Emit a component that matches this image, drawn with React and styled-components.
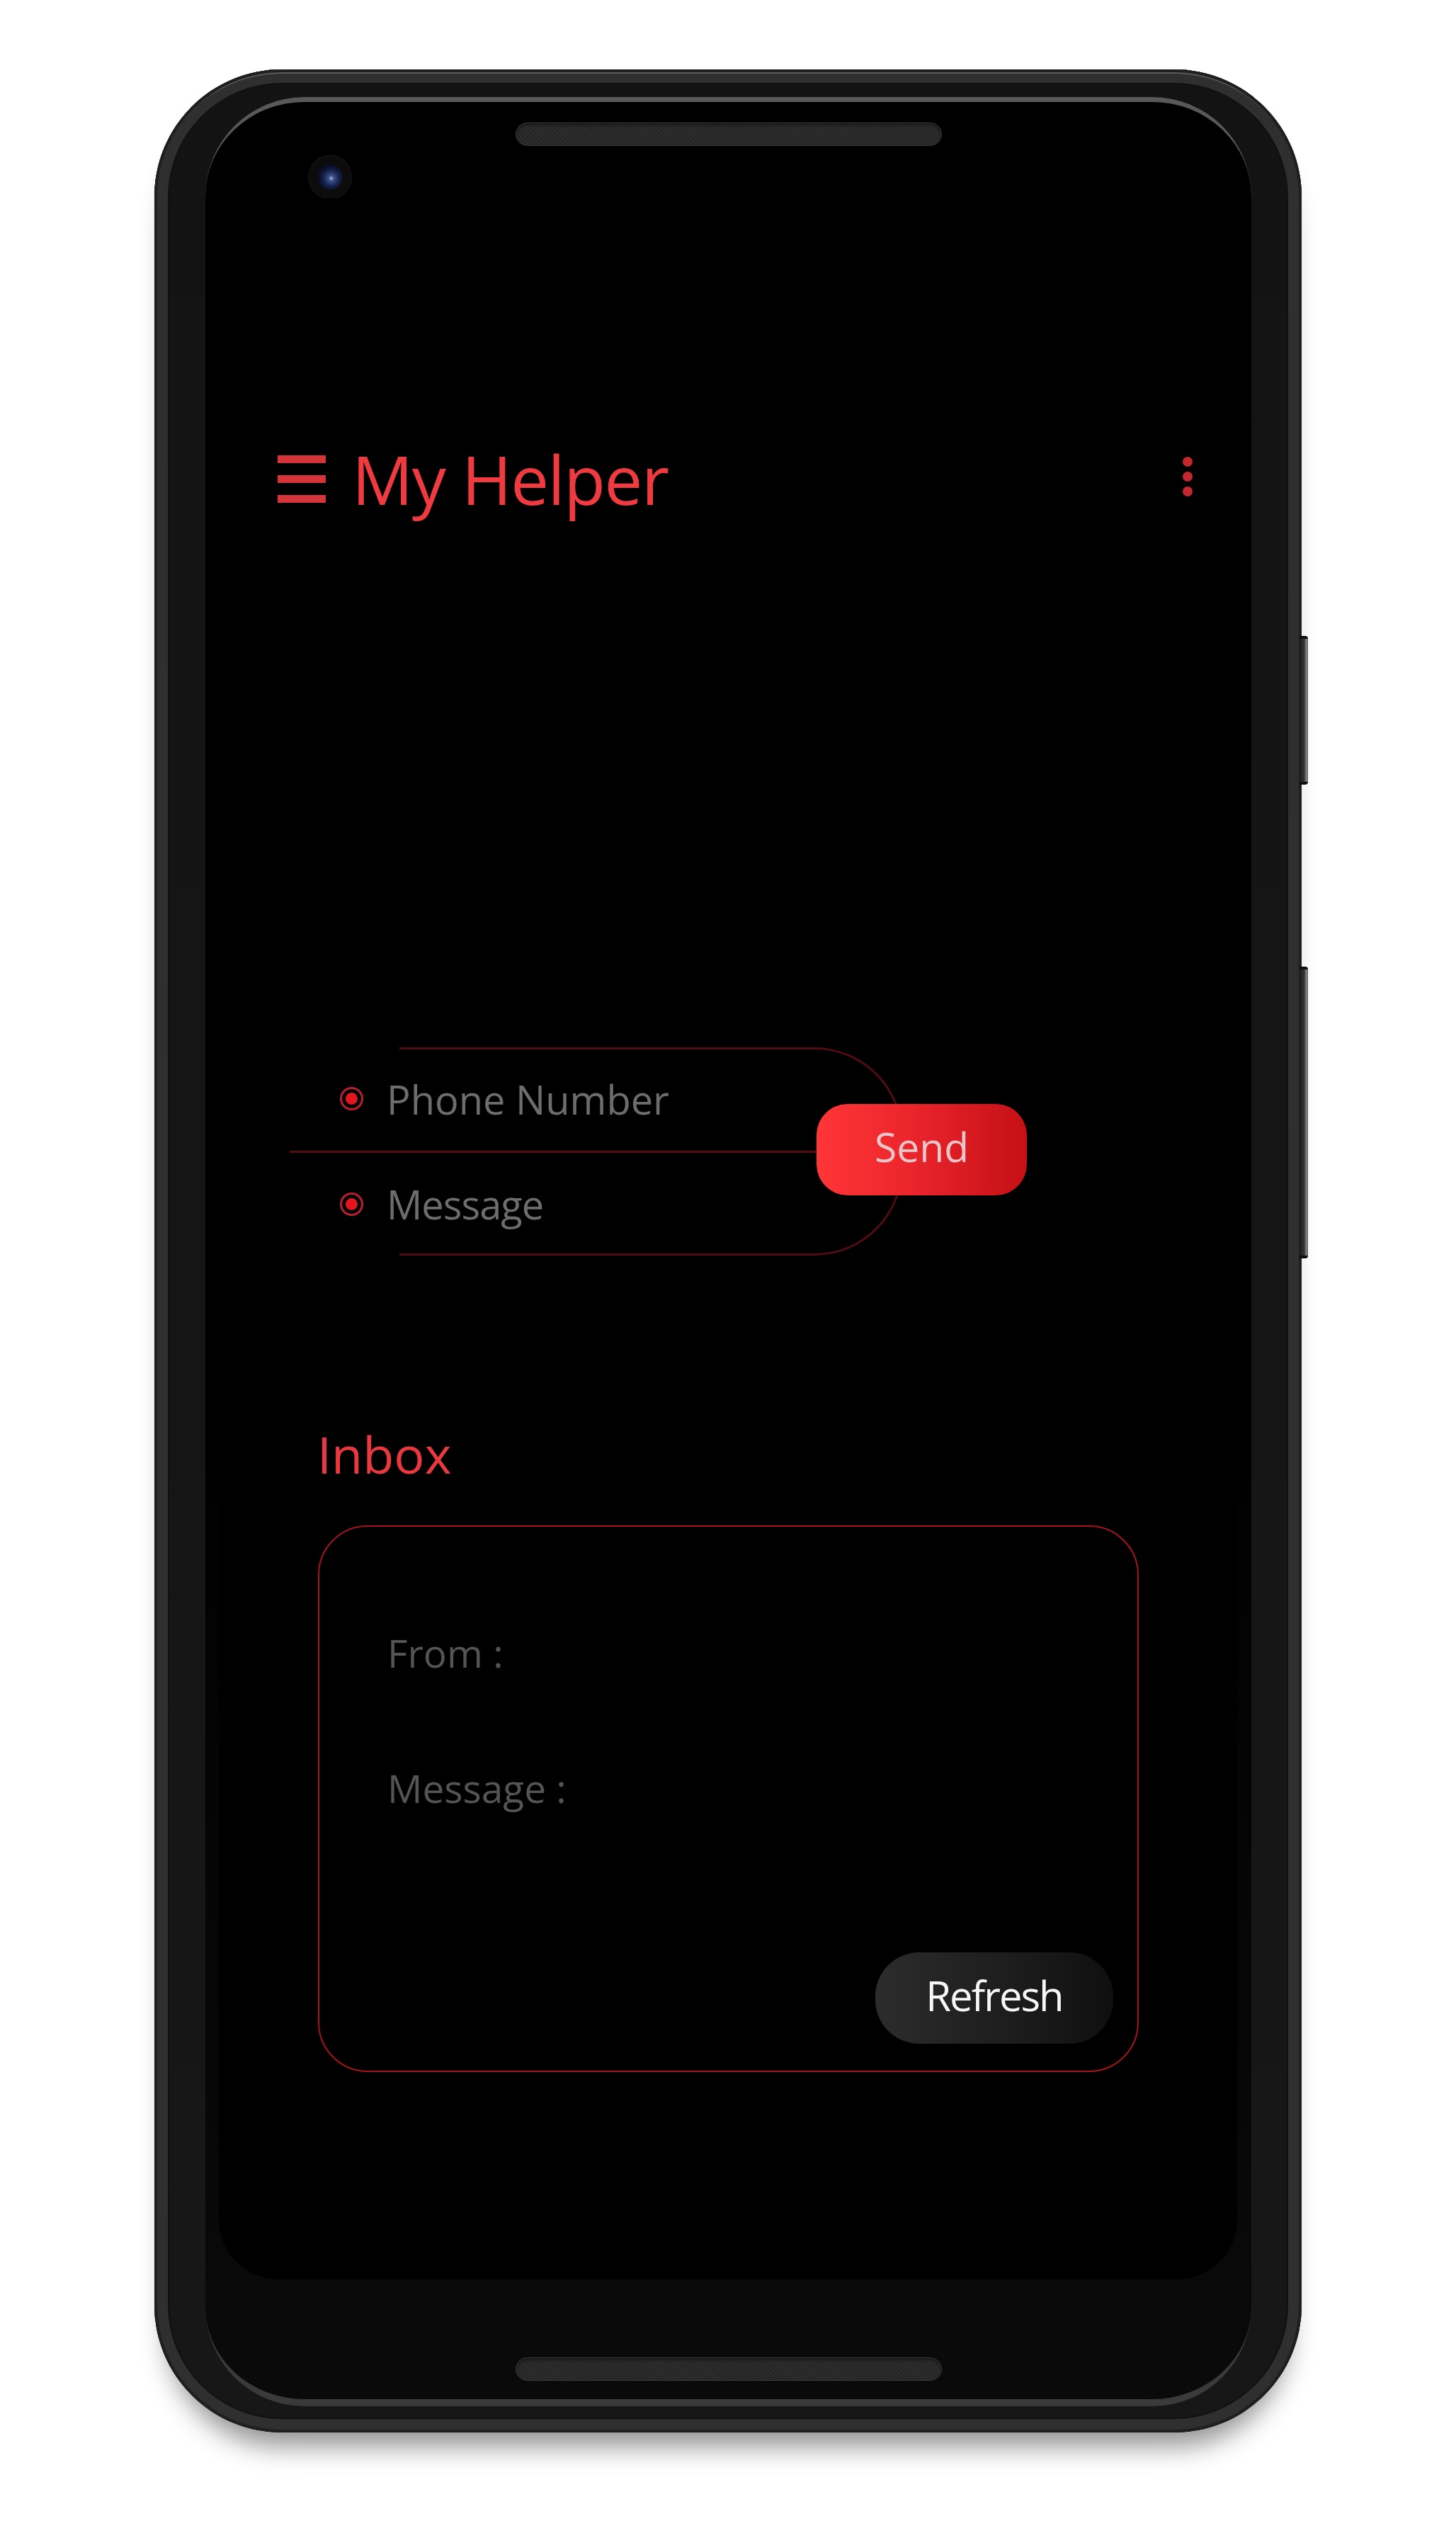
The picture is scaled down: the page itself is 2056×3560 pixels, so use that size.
import React from "react";
import styled, { createGlobalStyle } from "styled-components";

const Global = createGlobalStyle`
  html, body { margin: 0; padding: 0; background: #ffffff; }
  body { font-family: "Open Sans", "Noto Sans", sans-serif; }
  * { box-sizing: border-box; }
`;

const Page = styled.div`
  width: 2056px;
  height: 3560px;
  padding: 98px 0 0 218px;
  overflow: hidden;
`;

const Body = styled.div`
  position: relative;
  width: 1620px;
  height: 3337px;
  padding: 39px 71px 37px 72px;
  border-radius: 180px;
  background: linear-gradient(180deg, #131313 0%, #151515 50%, #171717 100%);
  box-shadow:
    inset 0 0 0 4px #1f1f1f,
    inset 0 6px 0 0 #5a5a5a,
    inset 0 0 0 19px #2f2f2f,
    inset 0 0 0 21px #101010,
    0 38px 36px -18px rgba(0, 0, 0, 0.42);
`;

const SideKey = styled.div`
  position: absolute;
  left: 1617px;
  top: ${(p) => p.$top}px;
  width: 12px;
  height: ${(p) => p.$h}px;
  border-radius: 0 4px 4px 0;
  background: linear-gradient(90deg, #1c1c1c 0%, #333 55%, #8d8d8d 85%, #4a4a4a 100%);
  border-top: 4px solid #0e0e0e;
  border-bottom: 4px solid #0e0e0e;
`;

const Glass = styled.div`
  width: 100%;
  height: 100%;
  display: flex;
  flex-direction: column;
  border-radius: 140px;
  border-top: 7px solid #585858;
  border-bottom: 10px solid #3a3a3a;
  background: linear-gradient(180deg, #000 0%, #000 55%, #0a0a0a 100%);
`;

const TopBezel = styled.div`
  height: 136px;
  flex-shrink: 0;
  display: flex;
  flex-direction: column;
`;

const Speaker = styled.div`
  align-self: center;
  width: 602px;
  height: 33px;
  margin-top: ${(p) => p.$mt}px;
  border-radius: 17px;
  border: 1px solid #3c3c3c;
  background:
    repeating-linear-gradient(45deg, rgba(255,255,255,0.03) 0 2px, rgba(0,0,0,0.05) 2px 4px),
    #272727;
  box-shadow: inset 0 2px 4px rgba(0,0,0,0.6);
  flex-shrink: 0;
`;

const Camera = styled.div`
  width: 60px;
  height: 60px;
  margin: 14px 0 0 146px;
  border-radius: 50%;
  background: #0c0c0c;
  box-shadow: 0 0 0 1px #161616;
  display: grid;
  place-items: center;
`;

const Lens = styled.div`
  width: 36px;
  height: 36px;
  border-radius: 50%;
  background: radial-gradient(circle at 55% 55%, #9ab0d0 0px, #3a4e86 4px, #17234f 11px, #0a0e22 18px);
`;

const Screen = styled.div`
  flex: 1;
  margin: 0 20px 0 19px;
  background: #000;
  border-radius: 0 0 85px 85px;
  display: flex;
  flex-direction: column;
  align-items: flex-start;
`;

const BottomBezel = styled.div`
  height: 169px;
  flex-shrink: 0;
  display: flex;
  flex-direction: column;
`;

const Toolbar = styled.div`
  align-self: stretch;
  height: 100px;
  margin-top: 346px;
  padding: 0 63px 0 83px;
  display: flex;
  align-items: center;
`;

const Hamburger = styled.div`
  display: flex;
  flex-direction: column;
  gap: 17px;
`;

const Bar = styled.span`
  display: block;
  width: 68px;
  height: 11px;
  background: #d5353a;
`;

const Title = styled.h1`
  margin: 0 0 0 37px;
  font-size: 96px;
  font-weight: 400;
  line-height: 1;
  letter-spacing: -1.5px;
  color: #ef3a40;
`;

const Kebab = styled.div`
  margin-left: auto;
  margin-top: -6px;
  display: flex;
  flex-direction: column;
  gap: 7px;
`;

const Dot = styled.span`
  width: 14px;
  height: 14px;
  border-radius: 50%;
  background: #c4272d;
`;

const FormRow = styled.div`
  margin: 753px 0 0 100px;
  display: flex;
  align-items: center;
`;

const FieldsBox = styled.div`
  position: relative;
  width: 866px;
  height: 294px;
  display: flex;
  flex-direction: column;
  &::before {
    content: "";
    position: absolute;
    left: 155px;
    top: 0;
    right: 0;
    bottom: 0;
    border: 3px solid #4f0c14;
    border-left: none;
    border-radius: 0 125px 125px 0;
    pointer-events: none;
  }
`;

const Field = styled.div`
  flex: 1;
  display: flex;
  align-items: center;
  padding-left: 71px;
  gap: 33px;
`;

const Radio = styled.span`
  width: 33px;
  height: 33px;
  border-radius: 50%;
  border: 3px solid #b5202c;
  display: grid;
  place-items: center;
  flex-shrink: 0;
  &::after {
    content: "";
    width: 17px;
    height: 17px;
    border-radius: 50%;
    background: #e3161e;
  }
`;

const FieldText = styled.span`
  font-size: 56px;
  line-height: 1;
  color: #6d6d6d;
  letter-spacing: ${(p) => p.$ls || 0}px;
`;

const Divider = styled.div`
  height: 3px;
  flex-shrink: 0;
  background: #540c15;
`;

const SendButton = styled.button`
  position: relative;
  z-index: 1;
  flex-shrink: 0;
  width: 297px;
  height: 129px;
  margin: 0 0 5px -122px;
  padding: 0 0 8px 0;
  border: none;
  border-radius: 44px;
  background: linear-gradient(90deg, #ff3638 0%, #ea252b 45%, #c41016 100%);
  color: #e8c5c8;
  font-family: "Open Sans", sans-serif;
  font-size: 57px;
  line-height: 1;
`;

const InboxTitle = styled.h2`
  margin: 244px 0 0 139px;
  font-size: 72px;
  font-weight: 400;
  line-height: 1;
  color: #e9393e;
`;

const InboxCard = styled.div`
  margin: 65px 0 0 140px;
  width: 1159px;
  height: 772px;
  border: 2px solid #a5141d;
  border-radius: 70px;
  padding: 150px 34px 38px 96px;
  display: flex;
  flex-direction: column;
`;

const Label = styled.div`
  font-size: 55px;
  line-height: 1;
  color: #545454;
  margin-top: ${(p) => p.$mt || 0}px;
`;

const RefreshButton = styled.button`
  margin-top: auto;
  align-self: flex-end;
  width: 336px;
  height: 129px;
  padding: 0 0 8px 0;
  border: none;
  border-radius: 62px;
  background: linear-gradient(90deg, #2c2c2c 0%, #1c1c1c 60%, #0f0f0f 100%);
  color: #f7f7f7;
  font-family: "Open Sans", sans-serif;
  font-size: 58px;
  line-height: 1;
  letter-spacing: -2px;
`;

export default function App() {
  return (
    <>
      <Global />
      <Page>
        <Body>
          <SideKey $top={800} $h={210} />
          <SideKey $top={1267} $h={412} />
          <Glass>
            <TopBezel>
              <Speaker $mt={29} />
              <Camera>
                <Lens />
              </Camera>
            </TopBezel>
            <Screen>
              <Toolbar>
                <Hamburger>
                  <Bar />
                  <Bar />
                  <Bar />
                </Hamburger>
                <Title>My Helper</Title>
                <Kebab>
                  <Dot />
                  <Dot />
                  <Dot />
                </Kebab>
              </Toolbar>
              <FormRow>
                <FieldsBox>
                  <Field>
                    <Radio />
                    <FieldText>Phone Number</FieldText>
                  </Field>
                  <Divider />
                  <Field>
                    <Radio />
                    <FieldText $ls={-1}>Message</FieldText>
                  </Field>
                </FieldsBox>
                <SendButton>Send</SendButton>
              </FormRow>
              <InboxTitle>Inbox</InboxTitle>
              <InboxCard>
                <Label>From :</Label>
                <Label $mt={136}>Message :</Label>
                <RefreshButton>Refresh</RefreshButton>
              </InboxCard>
            </Screen>
            <BottomBezel>
              <Speaker $mt={110} />
            </BottomBezel>
          </Glass>
        </Body>
      </Page>
    </>
  );
}
